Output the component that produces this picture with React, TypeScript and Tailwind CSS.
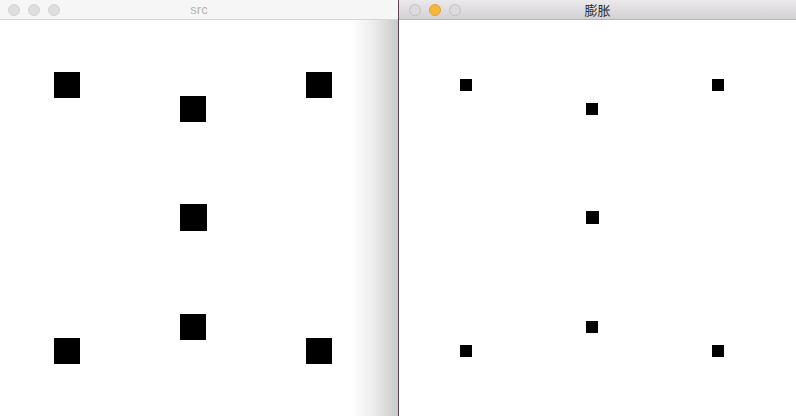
import React from 'react';

type Sq = { x: number; y: number; s: number };

const srcSquares: Sq[] = [
  { x: 54, y: 52, s: 26 },
  { x: 306, y: 52, s: 26 },
  { x: 180, y: 76, s: 26 },
  { x: 180, y: 184, s: 27 },
  { x: 180, y: 294, s: 26 },
  { x: 54, y: 318, s: 26 },
  { x: 306, y: 318, s: 26 },
];

const dilSquares: Sq[] = [
  { x: 61, y: 59, s: 12 },
  { x: 313, y: 59, s: 12 },
  { x: 187, y: 83, s: 12 },
  { x: 187, y: 191, s: 13 },
  { x: 187, y: 301, s: 12 },
  { x: 61, y: 325, s: 12 },
  { x: 313, y: 325, s: 12 },
];

const Canvas: React.FC<{ squares: Sq[] }> = ({ squares }) => (
  <div className="relative flex-1 bg-white">
    {squares.map((q, i) => (
      <div
        key={i}
        className="absolute bg-black"
        style={{ left: q.x, top: q.y, width: q.s, height: q.s }}
      />
    ))}
  </div>
);

export default function App() {
  return (
    <div
      className="flex w-[796px] h-[416px] overflow-hidden bg-white"
      style={{ fontFamily: '"Noto Sans CJK SC", "Liberation Sans", sans-serif' }}
    >
      {/* src window (inactive) */}
      <div className="relative flex flex-col w-[398px] h-full">
        <div className="relative flex items-center h-[20px] bg-[#f6f6f6] border-b border-[#d4d4d4] px-[8px] gap-[8px]">
          <span className="w-[12px] h-[12px] rounded-full bg-[#dedede] border border-[#d2d2d2]" />
          <span className="w-[12px] h-[12px] rounded-full bg-[#dedede] border border-[#d2d2d2]" />
          <span className="w-[12px] h-[12px] rounded-full bg-[#dedede] border border-[#d2d2d2]" />
          <span className="absolute inset-0 flex items-center justify-center text-[13px] leading-none text-[#b4b4b4] font-['Liberation_Sans',sans-serif]">
            src
          </span>
        </div>
        <Canvas squares={srcSquares} />
        <div className="absolute right-0 top-[20px] bottom-0 w-[48px] bg-gradient-to-r from-white/0 via-[#ececec] to-[#c9c9c9] pointer-events-none" />
      </div>

      {/* dilate window (active) */}
      <div className="flex flex-col flex-1 h-full border-l border-[#5c4452]">
        <div className="relative flex items-center h-[20px] bg-gradient-to-b from-[#ebe9eb] to-[#d3d1d3] border-b border-[#b6b4b6] pl-[10px] gap-[8px]">
          <span className="w-[12px] h-[12px] rounded-full bg-[#dcdbdc] border border-[#c2c0c2]" />
          <span className="w-[12px] h-[12px] rounded-full bg-[#f7b73c] border border-[#e3a231]" />
          <span className="w-[12px] h-[12px] rounded-full bg-[#dcdbdc] border border-[#c2c0c2]" />
          <span className="absolute inset-0 flex items-center justify-center text-[13px] leading-none text-[#2e2e2e]">
            膨胀
          </span>
        </div>
        <Canvas squares={dilSquares} />
      </div>
    </div>
  );
}
